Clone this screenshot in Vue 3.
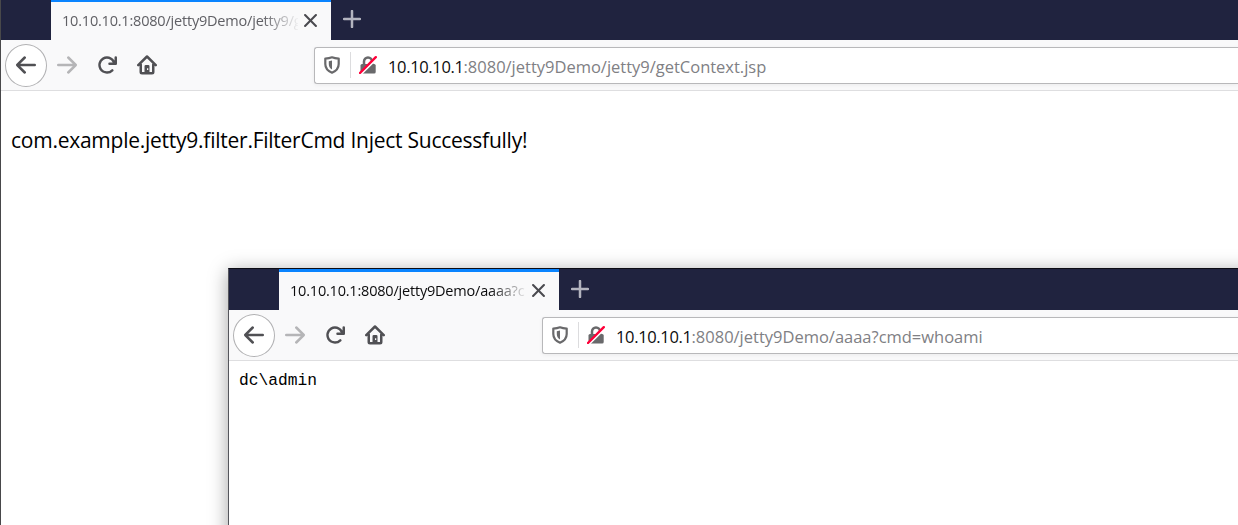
<script setup>
const windows = [
  {
    id: 'outer',
    tab: '10.10.10.1:8080/jetty9Demo/jetty9/g',
    host: '10.10.10.1',
    path: ':8080/jetty9Demo/jetty9/getContext.jsp',
    body: 'com.example.jetty9.filter.FilterCmd Inject Successfully!',
  },
  {
    id: 'inner',
    tab: '10.10.10.1:8080/jetty9Demo/aaaa?c',
    host: '10.10.10.1',
    path: ':8080/jetty9Demo/aaaa?cmd=whoami',
    body: 'dc\\admin',
  },
]
</script>

<template>
  <div class="desktop">
    <section v-for="w in windows" :key="w.id" class="window" :class="w.id">
      <header class="tabs">
        <div class="tab">
          <span class="title">{{ w.tab }}</span>
          <svg class="close" viewBox="0 0 12 12"><path d="M1 1l10 10M11 1L1 11" /></svg>
        </div>
        <svg class="plus" viewBox="0 0 18 18"><path d="M9 1v16M1 9h16" /></svg>
      </header>
      <nav class="nav">
        <span class="back">
          <svg class="icon" viewBox="0 0 16 16"><path d="M15 7H3.414l4.293-4.293a1 1 0 0 0-1.414-1.414l-6 6a1 1 0 0 0 0 1.414l6 6a1 1 0 0 0 1.414-1.414L3.414 9H15a1 1 0 0 0 0-2z" /></svg>
        </span>
        <svg class="icon forward" viewBox="0 0 16 16"><path d="M1 9h11.586l-4.293 4.293a1 1 0 0 0 1.414 1.414l6-6a1 1 0 0 0 0-1.414l-6-6a1 1 0 0 0-1.414 1.414L12.586 7H1a1 1 0 0 0 0 2z" /></svg>
        <svg class="icon reload" viewBox="0 0 16 16"><path d="M15 1a1 1 0 0 0-1 1v2.418A6.995 6.995 0 1 0 8 15a6.954 6.954 0 0 0 4.95-2.05 1 1 0 0 0-1.414-1.414A5.019 5.019 0 1 1 12.549 6H10a1 1 0 0 0 0 2h5a1 1 0 0 0 1-1V2a1 1 0 0 0-1-1z" /></svg>
        <svg class="icon home" viewBox="0 0 16 16">
          <path d="M1 8.1L8 1.2l7 6.9M3 7.5V13.500a1 1 0 0 0 1 1h8a1 1 0 0 0 1-1V7.5" fill="none" stroke="currentColor" stroke-width="2" stroke-linecap="round" stroke-linejoin="round" />
          <path fill-rule="evenodd" d="M6 14.8V9a1 1 0 0 1 1-1h2a1 1 0 0 1 1 1v5.8zM8 10.600h1v1.400H8z" />
        </svg>
        <div class="url">
          <svg class="shield" viewBox="0 0 16 18">
            <path d="M8 1.3C5.8 2.2 3.8 2.5 1.3 2.6V8c0 4.2 2.5 7 6.7 8.7C12.2 15 14.7 12.2 14.7 8V2.6C12.2 2.5 10.2 2.2 8 1.3z" fill="none" stroke="currentColor" stroke-width="2.2" stroke-linejoin="round" />
            <path d="M8 4.6v9C5.8 12.4 4.8 10.6 4.8 8V5.3z" />
          </svg>
          <i class="divider"></i>
          <svg class="lock" viewBox="0 0 18 18">
            <path d="M5 9V5.5a4 4 0 0 1 8 0V9" fill="none" stroke="currentColor" stroke-width="2.5" />
            <rect x="1.5" y="8" width="15.2" height="9.5" rx="1.5" />
            <path d="M1.9 18.3L18.3 2" stroke="#fff" stroke-width="2" />
            <path d="M1 17L16.8 1.2" stroke="#ff0039" stroke-width="2.4" stroke-linecap="round" />
          </svg>
          <span class="address"><b>{{ w.host }}</b>{{ w.path }}</span>
        </div>
      </nav>
      <main class="page">{{ w.body }}</main>
    </section>
  </div>
</template>

<style scoped>
.desktop {
  position: relative;
  width: 1238px;
  height: 525px;
  overflow: hidden;
  background: #fff;
  font-family: "Open Sans", "Noto Sans", sans-serif;
}
.window {
  box-sizing: border-box;
  background: #fff;
  border-left: 1px solid #48484a;
}
.outer { height: 525px; }
.inner {
  position: absolute;
  left: 228px;
  top: 268px;
  width: 1030px;
  height: 280px;
  border-top: 1px solid #0c0c14;
  border-left-color: #55565c;
  box-shadow: 0 3px 18px rgba(0, 0, 0, 0.36);
}
.tabs {
  display: flex;
  box-sizing: border-box;
  height: 40px;
  background: #20233f;
  padding-left: 50px;
}
.inner .tabs { height: 41px; }
.tab {
  display: flex;
  box-sizing: border-box;
  width: 280px;
  height: 100%;
  background: #f9f9fa;
  border-top: 2px solid #0a84ff;
  padding-left: 11px;
}
.inner .tab { border-top-width: 3px; }
.title {
  width: 236px;
  height: 36px;
  line-height: 38px;
  overflow: hidden;
  white-space: nowrap;
  font-size: 14.5px;
  letter-spacing: -0.2px;
  color: #606065;
  -webkit-mask-image: linear-gradient(to right, #000 200px, transparent 238px);
  mask-image: linear-gradient(to right, #000 200px, transparent 238px);
}
.inner .title { color: #0c0c0d; }
.close {
  width: 13px;
  height: 13px;
  margin: 12px 0 0 6px;
  fill: none;
  stroke: #4a4a4f;
  stroke-width: 1.9;
  stroke-linecap: round;
}
.plus {
  width: 18px;
  height: 18px;
  margin: 10px 0 0 12px;
  fill: none;
  stroke: #b3b4bf;
  stroke-width: 2.5;
  stroke-linecap: round;
}
.inner .plus { margin-top: 11px; }
.nav {
  display: flex;
  align-items: center;
  box-sizing: border-box;
  height: 51px;
  background: #f9f9fa;
  border-bottom: 1px solid #dedee0;
  padding-left: 4px;
  color: #505054;
}
.back {
  display: flex;
  align-items: center;
  justify-content: center;
  box-sizing: border-box;
  width: 42px;
  height: 43px;
  border: 1px solid #b1b1b3;
  border-radius: 50%;
  background: #fff;
}
.icon {
  width: 20px;
  height: 20px;
  flex: none;
  fill: currentColor;
}
.forward { margin-left: 10px; color: #b5b5b7; }
.reload { margin-left: 20px; }
.home { margin-left: 20px; }
.url {
  display: flex;
  align-items: center;
  box-sizing: border-box;
  flex: 1;
  height: 37px;
  margin-left: 157px;
  padding-left: 9px;
  border: 1px solid #b8b8ba;
  border-right: 0;
  border-radius: 3px 0 0 3px;
  background: #fff;
  box-shadow: 0 1px 4px rgba(0, 0, 0, 0.06);
  color: #69696b;
}
.shield { width: 16px; height: 18px; margin-top: -1px; fill: currentColor; }
.divider { width: 1px; height: 26px; margin: 0 8px 0 10px; background: #dcdcde; }
.lock { width: 18px; height: 18px; margin-top: -1px; fill: currentColor; }
.address {
  margin: 3px 0 0 11px;
  font-size: 16.5px;
  line-height: 24px;
  letter-spacing: -0.01px;
  white-space: nowrap;
  color: #808084;
}
.address b { font-weight: 400; letter-spacing: -0.35px; color: #0c0c0d; }
.outer .page {
  padding: 34px 0 0 10px;
  font-size: 21px;
  line-height: 30px;
  letter-spacing: -0.25px;
  color: #000;
}
.inner .page {
  padding: 10px 0 0 10px;
  font-family: "Liberation Mono", monospace;
  font-size: 16.25px;
  line-height: 20px;
  color: #000;
}
</style>
